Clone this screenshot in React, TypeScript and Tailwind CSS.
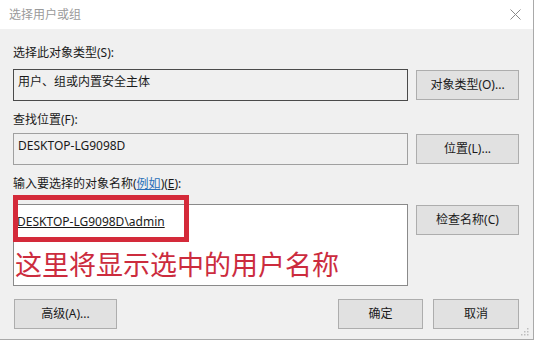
const font = "font-['Microsoft_YaHei','Noto_Sans','Noto_Sans_CJK_SC',sans-serif]";

function Btn({ label, w }: { label: string; w: string }) {
  return (
    <div
      className={`${w} h-[30px] flex items-center justify-center bg-[#e1e1e1] border border-[#adadad] text-[12px] text-[#1a1a1a]`}
    >
      {label}
    </div>
  );
}

export default function App() {
  return (
    <div className={`${font} w-[535px] h-[341px] bg-white overflow-hidden`}>
      <div className="w-[534px] h-[340px] border-r border-b border-[#a9a9a9] flex flex-col">
        {/* title bar */}
        <div className="h-[29px] bg-white flex items-center justify-between pl-[9px] pr-[12px]">
          <span className="text-[12px] text-[#9a9a9a] leading-4">选择用户或组</span>
          <svg width="11" height="11" viewBox="0 0 11 11" className="text-[#8a8a8a]">
            <path d="M0.5 0.5 L10.5 10.5 M10.5 0.5 L0.5 10.5" stroke="currentColor" strokeWidth="1" />
          </svg>
        </div>

        {/* body */}
        <div className="flex-1 bg-[#f0f0f0] pl-[13px] pr-[14px] pt-[16px] flex flex-col text-[12px] text-[#1a1a1a] leading-4 relative">
          <div>选择此对象类型(S):</div>
          <div className="mt-[8px] flex items-center justify-between">
            <div className="w-[395px] h-[32px] border border-[#4a4a4a] bg-[#f0f0f0] pl-[4px] pt-[4px]">
              用户、组或内置安全主体
            </div>
            <Btn label="对象类型(O)..." w="w-[103px]" />
          </div>

          <div className="mt-[11px]">查找位置(F):</div>
          <div className="mt-[5px] flex items-center justify-between">
            <div className="w-[395px] h-[32px] border border-[#a0a0a0] bg-[#f0f0f0] pl-[4px] pt-[4px] font-['Segoe_UI','Noto_Sans',sans-serif]">
              DESKTOP-LG9098D
            </div>
            <Btn label="位置(L)..." w="w-[103px]" />
          </div>

          <div className="mt-[11px]">
            输入要选择的对象名称(<span className="text-[#2a6fb8] underline">例如</span>)(<span className="underline">E</span>):
          </div>
          <div className="mt-[12px] flex items-start justify-between">
            <div className="w-[395px] h-[82px] border border-[#8a8a8a] bg-white relative">
              <div className="pl-[3px] pt-[9px] underline font-['Segoe_UI','Noto_Sans',sans-serif]">DESKTOP-LG9098D\admin</div>
              <div className="pl-[1px] mt-[20px] text-[27px] leading-[30px] text-[#cc2c3e]">这里将显示选中的用户名称</div>
              <div className="absolute left-[-1px] top-[-10px] w-[176px] h-[47px] border-[5px] border-[#d42a3a]" />
            </div>
            <div className="mt-[1px]">
              <Btn label="检查名称(C)" w="w-[103px]" />
            </div>
          </div>

          <div className="mt-[13px] flex items-center">
            <Btn label="高级(A)..." w="w-[103px] ml-[1px]" />
            <div className="ml-auto flex gap-[10px]">
              <Btn label="确定" w="w-[85px]" />
              <Btn label="取消" w="w-[86px]" />
            </div>
          </div>

          <svg width="8" height="8" viewBox="0 0 8 8" className="absolute right-[4px] bottom-[3px]">
            <g fill="#bdbdbd">
              <rect x="6" y="0" width="1.5" height="1.5" />
              <rect x="3" y="3" width="1.5" height="1.5" />
              <rect x="6" y="3" width="1.5" height="1.5" />
              <rect x="0" y="6" width="1.5" height="1.5" />
              <rect x="3" y="6" width="1.5" height="1.5" />
              <rect x="6" y="6" width="1.5" height="1.5" />
            </g>
          </svg>
        </div>
      </div>
    </div>
  );
}
